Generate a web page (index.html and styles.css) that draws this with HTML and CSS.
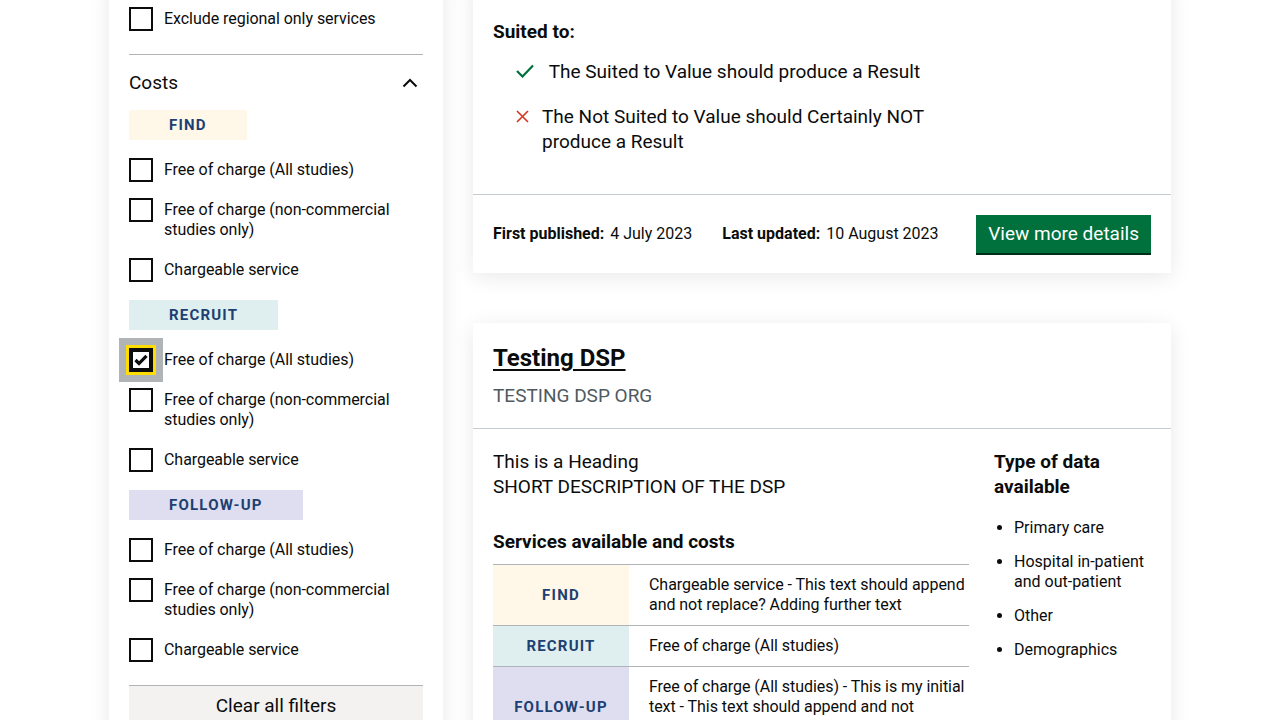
FILE: index.html
```html
<!DOCTYPE html>
<html lang="en">
<head>
<meta charset="utf-8">
<title>Data service providers</title>
<link rel="stylesheet" href="styles.css">
</head>
<body>
<div class="layout">
  <aside class="filters">
    <ul class="checks">
      <li class="check"><span class="box"></span><span class="lbl">Exclude regional only services</span></li>
    </ul>
    <div class="section">
      <div class="section-head">
        <h2>Costs</h2>
        <svg class="chev" width="16" height="10" viewBox="0 0 16 10"><path d="M1.5 8.5 L8 2 L14.5 8.5" fill="none" stroke="#0b0c0c" stroke-width="2"/></svg>
      </div>
      <div class="tag tag-find">FIND</div>
      <ul class="checks">
        <li class="check"><span class="box"></span><span class="lbl">Free of charge (All studies)</span></li>
        <li class="check"><span class="box"></span><span class="lbl">Free of charge (non-commercial studies only)</span></li>
        <li class="check"><span class="box"></span><span class="lbl">Chargeable service</span></li>
      </ul>
      <div class="tag tag-recruit">RECRUIT</div>
      <ul class="checks">
        <li class="check"><span class="box checked focused"><svg width="14" height="12" viewBox="0 0 14 12"><path d="M1.5 6 L5 9.5 L12.5 1.8" fill="none" stroke="#0b0c0c" stroke-width="3.2"/></svg></span><span class="lbl">Free of charge (All studies)</span></li>
        <li class="check"><span class="box"></span><span class="lbl">Free of charge (non-commercial studies only)</span></li>
        <li class="check"><span class="box"></span><span class="lbl">Chargeable service</span></li>
      </ul>
      <div class="tag tag-follow">FOLLOW-UP</div>
      <ul class="checks">
        <li class="check"><span class="box"></span><span class="lbl">Free of charge (All studies)</span></li>
        <li class="check"><span class="box"></span><span class="lbl">Free of charge (non-commercial studies only)</span></li>
        <li class="check"><span class="box"></span><span class="lbl">Chargeable service</span></li>
      </ul>
      <button class="clear">Clear all filters</button>
    </div>
  </aside>

  <main class="results">
    <article class="card">
      <div class="card-body first">
        <div class="cols">
          <div class="main-col">
            <h3 class="suited-title">Suited to:</h3>
            <ul class="suited">
              <li><svg class="ico ico-yes" width="18" height="14" viewBox="0 0 18 14"><path d="M1 7 L6.5 12.5 L17 1.5" fill="none" stroke="#00703c" stroke-width="2.2"/></svg><span> The Suited to Value should produce a Result</span></li>
              <li><svg class="ico ico-no" width="13" height="13" viewBox="0 0 13 13"><path d="M1 1 L12 12 M12 1 L1 12" fill="none" stroke="#d4351c" stroke-width="1.6"/></svg><span>The Not Suited to Value should Certainly NOT produce a Result</span></li>
            </ul>
          </div>
        </div>
      </div>
      <div class="card-foot">
        <div class="meta"><b>First published:</b><span>4 July 2023</span></div>
        <div class="meta"><b>Last updated:</b><span>10 August 2023</span></div>
        <a class="btn" href="#">View more details</a>
      </div>
    </article>

    <article class="card">
      <div class="card-head">
        <h2 class="title"><a href="#">Testing DSP</a></h2>
        <p class="org">TESTING DSP ORG</p>
      </div>
      <div class="card-body">
        <div class="cols">
          <div class="main-col">
            <p class="desc">This is a Heading<br>SHORT DESCRIPTION OF THE DSP</p>
            <h3 class="sub">Services available and costs</h3>
            <table class="costs">
              <tr><th class="cell-find">FIND</th><td>Chargeable service - This text should append and not replace? Adding further text</td></tr>
              <tr><th class="cell-recruit">RECRUIT</th><td>Free of charge (All studies)</td></tr>
              <tr><th class="cell-follow">FOLLOW-UP</th><td>Free of charge (All studies) - This is my initial text - This text should append and not replace</td></tr>
            </table>
          </div>
          <div class="side-col">
            <h3 class="sub">Type of data available</h3>
            <ul class="bullets">
              <li>Primary care</li>
              <li>Hospital in-patient and out-patient</li>
              <li>Other</li>
              <li>Demographics</li>
            </ul>
          </div>
        </div>
      </div>
    </article>
  </main>
</div>
</body>
</html>
```

FILE: styles.css
```css
* { box-sizing: border-box; }
html, body { margin: 0; padding: 0; background: #fff; }
body {
  font-family: Roboto, "Liberation Sans", Arial, sans-serif;
  color: #0b0c0c;
  font-size: 16px;
  line-height: 20px;
  overflow: hidden;
  height: 720px;
}
ul { list-style: none; margin: 0; padding: 0; }
h2, h3, p { margin: 0; }

.layout {
  width: 1062px;
  margin: -21px auto 0;
  display: flex;
  gap: 30px;
  align-items: flex-start;
}

/* Sidebar */
.filters {
  width: 334px;
  flex: none;
  background: #fff;
  box-shadow: 0 4px 20px rgba(0, 0, 0, 0.09);
  padding: 28px 20px 40px;
}
.checks { display: flex; flex-direction: column; gap: 16px; }
.check { display: flex; align-items: flex-start; }
.box {
  width: 24px; height: 24px; flex: none;
  border: 2px solid #0b0c0c;
  background: #fff;
  display: flex; align-items: center; justify-content: center;
  margin-right: 11px;
}
.box.focused {
  border-width: 4px;
  box-shadow: 0 0 0 3px #ffdd00, 0 0 0 10px #b1b4b6;
}
.lbl { padding: 2px 0; letter-spacing: -0.05px; }

.section { border-top: 1px solid #b1b4b6; margin-top: 23px; }
.section-head {
  display: flex; justify-content: space-between; align-items: center;
  padding: 15px 5px 15px 0;
}
.section-head h2 { font-size: 19px; line-height: 25px; font-weight: 400; }
.chev { display: block; }

.tag {
  display: inline-block;
  height: 30px; line-height: 30px;
  padding: 0 40px;
  font-weight: 700;
  font-size: 15px;
  letter-spacing: 1.2px;
  color: #1d3f72;
  margin-bottom: 18px;
}
.tag-find, .cell-find { background: #fff7e8; }
.tag-recruit, .cell-recruit { background: #dfeeee; }
.tag-follow, .cell-follow { background: #dfdef0; }
.checks + .tag { margin-top: 18px; }

.clear {
  display: block; width: 100%;
  margin-top: 23px;
  border: 0; border-top: 1px solid #b1b4b6;
  background: #f3f2f1;
  font-family: inherit;
  font-size: 19px; line-height: 25px;
  color: #0b0c0c;
  padding: 7px 0 10px;
}

/* Results */
.results { width: 698px; flex: none; display: flex; flex-direction: column; gap: 50px; }
.card { background: #fff; box-shadow: 0 4px 20px rgba(0, 0, 0, 0.09); }
.card-body { padding: 20px; }
.card-body.first { padding-top: 40px; padding-bottom: 40px; }
.cols { display: grid; grid-template-columns: 476px 157px; column-gap: 25px; }

.suited-title { font-size: 19px; line-height: 25px; font-weight: 700; margin-bottom: 15px; }
.suited { padding-left: 23px; display: flex; flex-direction: column; gap: 20px; font-size: 19px; line-height: 25px; }
.suited li { display: flex; align-items: flex-start; }
.ico { flex: none; margin-top: 5px; }
.ico-yes { margin-right: 10px; }
.ico-no { margin-right: 13px; margin-top: 6px; }
.suited li span { white-space: pre-wrap; }

.card-foot {
  border-top: 1px solid #c3ccd1;
  padding: 20px;
  display: flex; align-items: center;
}
.meta { display: flex; gap: 6px; margin-right: 30px; }
.meta b { font-weight: 700; }
.btn {
  margin-left: auto;
  background: #00703c;
  color: #fff;
  text-decoration: none;
  font-size: 19px; line-height: 25px;
  padding: 6px 12px 7px;
  box-shadow: 0 2px 0 #002d18;
}

.card-head { padding: 20px; border-bottom: 1px solid #c3ccd1; }
.title { font-size: 24px; line-height: 30px; font-weight: 700; margin-bottom: 10px; }
.title a { color: #0b0c0c; text-decoration: underline; text-underline-offset: 3px; text-decoration-thickness: 2px; }
.org { font-size: 19px; line-height: 25px; color: #505a5f; }

.desc { font-size: 19px; line-height: 25px; margin-bottom: 30px; }
.sub { font-size: 19px; line-height: 25px; font-weight: 700; margin-bottom: 10px; }
.side-col .sub { margin-bottom: 19px; }

.costs { width: 100%; border-collapse: collapse; }
.costs tr { border-top: 1px solid #b1b4b6; }
.costs th {
  width: 136px;
  font-size: 15px; letter-spacing: 1.2px; color: #1d3f72; font-weight: 700;
  text-align: center; vertical-align: middle;
  padding: 10px 0;
}
.costs td { padding: 10px 0 10px 20px; vertical-align: top; letter-spacing: -0.05px; }

.bullets { list-style: disc; padding-left: 20px; display: flex; flex-direction: column; gap: 14px; }
```
